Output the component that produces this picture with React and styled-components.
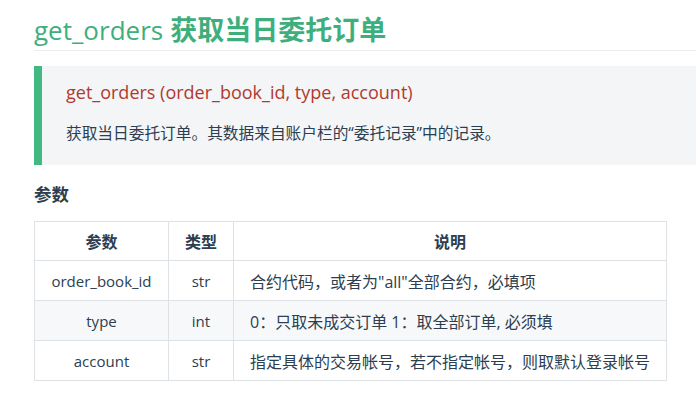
import React from "react";
import styled, { createGlobalStyle } from "styled-components";

const Global = createGlobalStyle`
  html, body { margin: 0; padding: 0; background: #fff; }
  body {
    font-family: "Open Sans", "Noto Sans CJK SC", sans-serif;
    color: #2c3e50;
    -webkit-font-smoothing: antialiased;
  }
`;

const Page = styled.div`
  padding-left: 34px;
  display: flex;
  flex-direction: column;
  align-items: flex-start;
`;

const Title = styled.h1`
  align-self: stretch;
  margin: 0;
  padding: 14px 0 4px;
  font-size: 27px;
  line-height: 32px;
  font-weight: 700;
  color: #3eaf7c;
  border-bottom: 1px solid #eaecef;
`;

const TitleCode = styled.span`
  font-weight: 400;
  font-size: 26px;
`;

const Quote = styled.div`
  align-self: stretch;
  margin-top: 15px;
  background: #f3f5f7;
  border-left: 8px solid #42b983;
  padding: 13px 0 21px 24px;
  display: flex;
  flex-direction: column;
  gap: 17px;
`;

const Signature = styled.div`
  font-size: 18px;
  line-height: 26px;
  color: #b03a2e;
`;

const Desc = styled.div`
  font-size: 15.7px;
  line-height: 22px;
  color: #2c3e50;
`;

const SubHead = styled.h3`
  margin: 17px 0 0;
  font-size: 17.5px;
  line-height: 24px;
  font-weight: 700;
  color: #2c3e50;
`;

const Table = styled.table`
  margin-top: 15px;
  border-collapse: collapse;
  font-size: 16px;
  color: #2c3e50;
`;

const Row = styled.tr`
  background: ${(p) => (p.$alt ? "#f6f8fa" : "#fff")};
`;

const Th = styled.th`
  border: 1px solid #dfe2e5;
  height: 39px;
  padding: 0;
  font-weight: 700;
  text-align: center;
  width: ${(p) => p.$w}px;
  box-sizing: border-box;
`;

const Td = styled.td`
  border: 1px solid #dfe2e5;
  height: 39px;
  padding: 0 ${(p) => (p.$left ? "16px" : "0")};
  text-align: ${(p) => (p.$left ? "left" : "center")};
  font-size: ${(p) => (p.$left ? "16px" : "15px")};
`;

const rows = [
  ["order_book_id", "str", "合约代码，或者为\"all\"全部合约，必填项"],
  ["type", "int", "0：只取未成交订单  1：取全部订单, 必须填"],
  ["account", "str", "指定具体的交易帐号，若不指定帐号，则取默认登录帐号"],
];

export default function App() {
  return (
    <>
      <Global />
      <Page>
        <Title>
          <TitleCode>get_orders</TitleCode> 获取当日委托订单
        </Title>
        <Quote>
          <Signature>get_orders (order_book_id, type, account)</Signature>
          <Desc>获取当日委托订单。其数据来自账户栏的“委托记录”中的记录。</Desc>
        </Quote>
        <SubHead>参数</SubHead>
        <Table>
          <thead>
            <Row>
              <Th $w={134}>参数</Th>
              <Th $w={65}>类型</Th>
              <Th $w={433}>说明</Th>
            </Row>
          </thead>
          <tbody>
            {rows.map((r, i) => (
              <Row key={r[0]} $alt={i % 2 === 1}>
                <Td>{r[0]}</Td>
                <Td>{r[1]}</Td>
                <Td $left>{r[2]}</Td>
              </Row>
            ))}
          </tbody>
        </Table>
      </Page>
    </>
  );
}
